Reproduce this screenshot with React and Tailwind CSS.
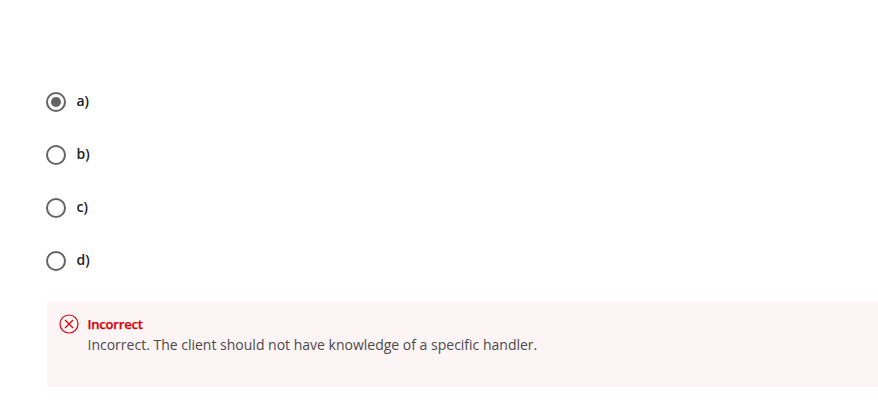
const options = ['a)', 'b)', 'c)', 'd)'];

function Radio({ checked }) {
  return (
    <span className="flex size-5 items-center justify-center rounded-full border-2 border-[#636363] bg-white">
      {checked && <span className="size-2.5 rounded-full bg-[#636363]" />}
    </span>
  );
}

export default function App() {
  return (
    <main className="h-[415px] w-full overflow-hidden bg-white pt-[92px] pl-[46px] font-['Open_Sans',sans-serif] text-sm text-[#4a4a4a]">
      <div className="flex flex-col gap-[33px]">
        {options.map((label, i) => (
          <div key={label} className="flex h-5 items-center gap-[10.5px]">
            <Radio checked={i === 0} />
            <span className="-mt-0.5 text-sm leading-5 font-semibold text-[#202020]">{label}</span>
          </div>
        ))}
      </div>
      <section className="mt-[31px] ml-px flex h-[85px] gap-[8.5px] bg-[#fdf4f5] pt-3 pl-3">
        <svg className="size-5 shrink-0" viewBox="0 0 20 20" fill="none" stroke="#d60008" strokeWidth="1.2">
          <circle cx="10" cy="10" r="9" />
          <path d="M6 6l8 8M14 6l-8 8" />
        </svg>
        <div>
          <p className="text-[13px] leading-5 font-semibold tracking-[-0.2px] text-[#d60008] [-webkit-text-stroke:0.25px_#d60008]">Incorrect</p>
          <p className="mt-px text-sm leading-5">Incorrect. The client should not have knowledge of a specific handler.</p>
        </div>
      </section>
    </main>
  );
}
